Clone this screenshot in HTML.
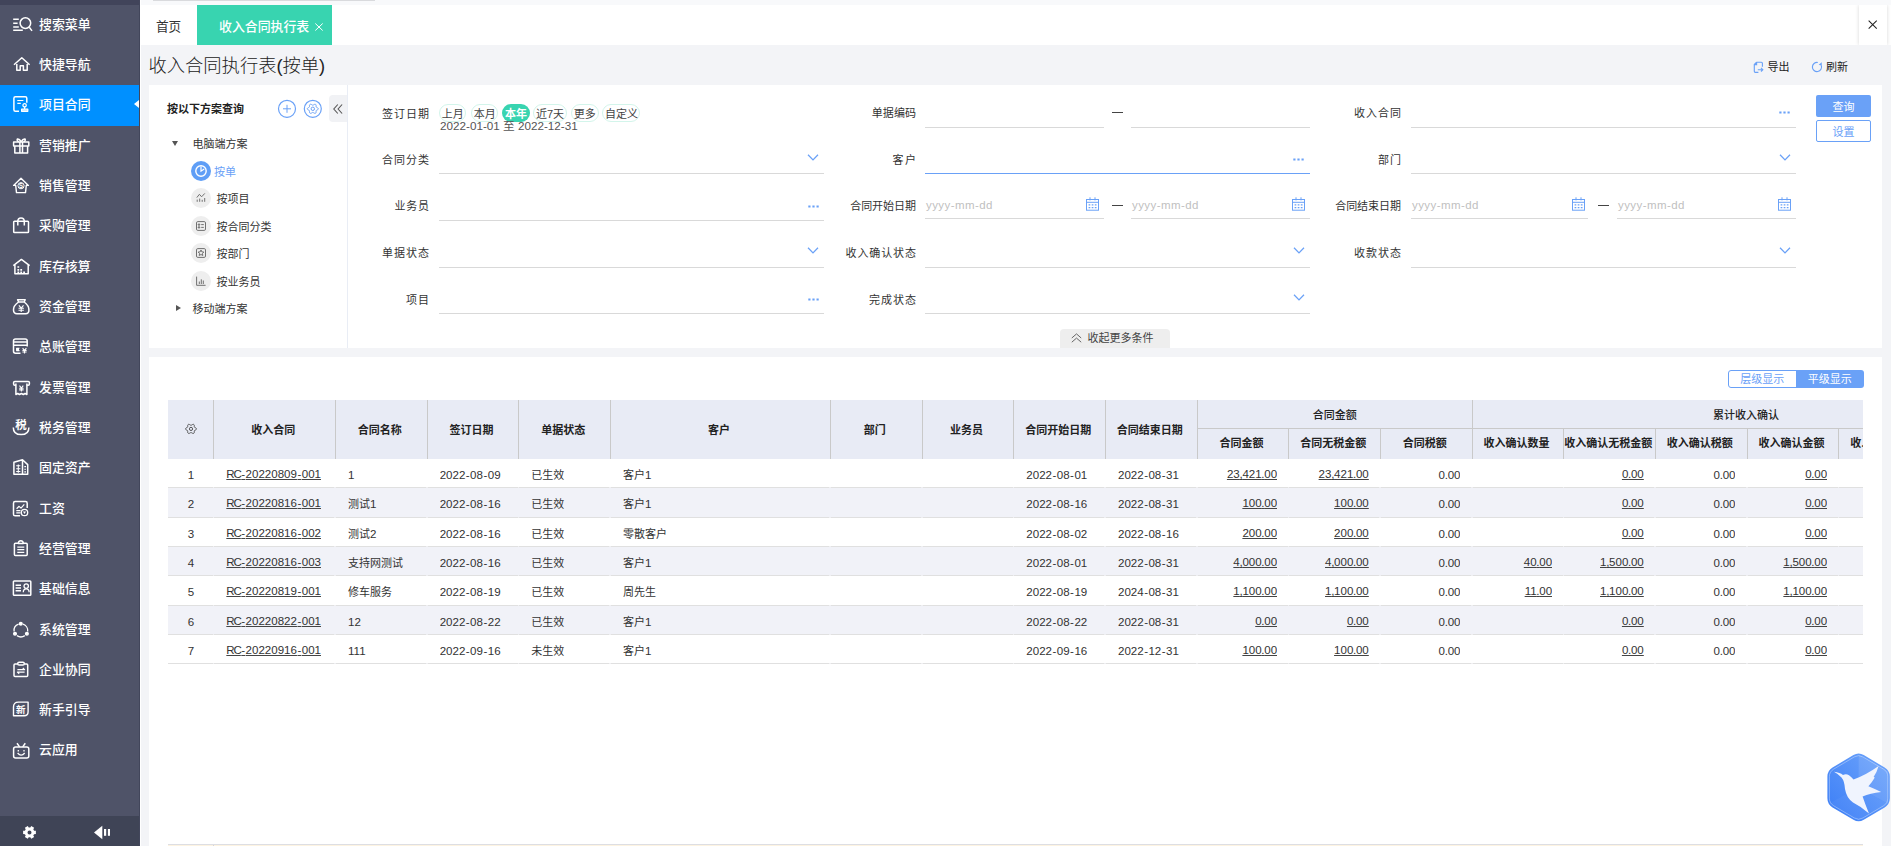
<!DOCTYPE html>
<html lang="zh-CN"><head><meta charset="utf-8"><title>收入合同执行表(按单)</title><style>
*{box-sizing:border-box;margin:0;padding:0}
html,body{width:1891px;height:846px;overflow:hidden}
body{position:relative;background:#f3f4f7;font-family:"Liberation Sans","Noto Sans CJK SC",sans-serif;font-size:11px;color:#333;-webkit-font-smoothing:antialiased}
.a{position:absolute;white-space:nowrap}
#side{left:0;top:0;width:140px;height:846px;background:#4f5368}
#side .top{left:0;top:0;width:140px;height:5px;background:#41445a}
#side .bot{left:0;top:816px;width:140px;height:30px;background:#3f4456}
.mi{left:0;width:139px;height:40.33px;color:#fff;font-size:12.9px;line-height:40.33px;font-weight:500}
.mi.on{background:#0090ff}
.mi span{position:absolute;left:39px;top:-0.5px}
.mi svg{position:absolute;left:13px;top:10.67px;width:16px;height:16px;overflow:visible;fill:none;stroke:#fff;stroke-width:1.5;stroke-linecap:butt;stroke-linejoin:round}
#tabs{left:140px;top:5px;width:1751px;height:40px;background:#fff;overflow:hidden}
.lbl{font-size:11px;line-height:16px;height:16px;text-align:right;color:#333}
.ul{height:1px;background:#d9d9d9}
.ph{font-size:11.5px;color:#bfbfbf;line-height:16px;height:16px;letter-spacing:0.42px}
.hd{font-weight:700;font-size:11px;color:#222;text-align:center;border-left:1px solid #c9c9c9}
.hd span{position:absolute;left:0;right:0}
.cell{font-size:11.55px;color:#333;top:0;height:29.33px;line-height:30.6px;overflow:hidden}
i{font-style:normal}
i.h{margin:0 .46px}
i.p{margin:0 -.3px}
i.z{font-size:11px}
i.rc{letter-spacing:-1.1px}
.en{font-size:11.55px}
.cell.r{text-align:right}
.cell u{text-decoration:underline;text-underline-offset:0.6px;text-decoration-thickness:1px;text-decoration-color:#444}
.row{left:168px;width:1695px;height:29.33px}
.row.ev{background:#f1f2f8}
.tree{font-size:11px;line-height:16px;height:16px;color:#333;margin-top:.8px}
.cir{width:20px;height:20px;border-radius:50%;background:#eee}
.sep{left:0;width:1695px;height:1px;background:linear-gradient(90deg,#e0e0e0 0.0px,#e0e0e0 44.6px,#eeeef1 44.6px,#eeeef1 46.2px,#e0e0e0 46.2px,#e0e0e0 166.3px,#eeeef1 166.3px,#eeeef1 167.9px,#e0e0e0 167.9px,#e0e0e0 258.0px,#eeeef1 258.0px,#eeeef1 259.6px,#e0e0e0 259.6px,#e0e0e0 349.6px,#eeeef1 349.6px,#eeeef1 351.2px,#e0e0e0 351.2px,#e0e0e0 441.3px,#eeeef1 441.3px,#eeeef1 442.9px,#e0e0e0 442.9px,#e0e0e0 661.3px,#eeeef1 661.3px,#eeeef1 662.9px,#e0e0e0 662.9px,#e0e0e0 753.0px,#eeeef1 753.0px,#eeeef1 754.6px,#e0e0e0 754.6px,#e0e0e0 844.6px,#eeeef1 844.6px,#eeeef1 846.2px,#e0e0e0 846.2px,#e0e0e0 936.3px,#eeeef1 936.3px,#eeeef1 937.9px,#e0e0e0 937.9px,#e0e0e0 1028.0px,#eeeef1 1028.0px,#eeeef1 1029.6px,#e0e0e0 1029.6px,#e0e0e0 1119.6px,#eeeef1 1119.6px,#eeeef1 1121.2px,#e0e0e0 1121.2px,#e0e0e0 1211.3px,#eeeef1 1211.3px,#eeeef1 1212.9px,#e0e0e0 1212.9px,#e0e0e0 1303.0px,#eeeef1 1303.0px,#eeeef1 1304.6px,#e0e0e0 1304.6px,#e0e0e0 1394.6px,#eeeef1 1394.6px,#eeeef1 1396.2px,#e0e0e0 1396.2px,#e0e0e0 1486.3px,#eeeef1 1486.3px,#eeeef1 1487.9px,#e0e0e0 1487.9px,#e0e0e0 1578.0px,#eeeef1 1578.0px,#eeeef1 1579.6px,#e0e0e0 1579.6px,#e0e0e0 1669.6px,#eeeef1 1669.6px,#eeeef1 1671.2px,#e0e0e0 1671.2px,#e0e0e0 1700px)}</style></head><body>
<div id="side" class="a">
<div class="a top"></div>
<div class="a" style="left:0;top:84.8px;width:139px;height:41.2px;background:#0090ff"></div>
<div class="a mi" style="top:5.00px"><svg viewBox="0 0 16 16"><path d="M0.2 3.3H5.8M0.2 7.2H4.6M0.2 11.1H5.8M0.2 14.3H9.8"/><circle cx="12.4" cy="7.1" r="5.3"/><path d="M16.3 11.3L19 14.9"/></svg><span>搜索菜单</span></div>
<div class="a mi" style="top:45.33px"><svg viewBox="0 0 16 16"><path d="M1 8.8L8.8 1.8L16.6 8.8M3.8 8V14.3H7.2V9.8H10.4V14.3H14.2V8"/></svg><span>快捷导航</span></div>
<div class="a mi" style="top:85.67px"><svg viewBox="0 0 16 16"><path d="M13.8 6.8V2.3Q13.8 0.8 12.3 0.8H2.4Q0.9 0.8 0.9 2.3V13.8Q0.9 15.3 2.4 15.3H6"/><path d="M4.3 4.5H10.4M4.3 7.4H7.8" stroke-width="1.2"/><circle cx="11.6" cy="9.3" r="1.7" stroke-width="1.3"/><path d="M8.6 13H14.8V15.3H8.6ZM11.6 11V13" fill="rgba(255,255,255,.75)" stroke-width="1.2"/></svg><span>项目合同</span></div>
<div class="a mi" style="top:126.00px"><svg viewBox="0 0 16 16"><rect x="0.6" y="4.9" width="15.2" height="4.1"/><path d="M1.8 9V15.9H14.6V9M6.9 4.9V15.9M9.5 4.9V15.9M8.2 4.9Q6.5 1.6 4.4 2Q3.4 3.6 5.8 4.9M8.2 4.9Q9.9 1.6 12 2Q13 3.6 10.6 4.9"/></svg><span>营销推广</span></div>
<div class="a mi" style="top:166.33px"><svg viewBox="0 0 16 16"><path d="M0.6 8.4L8 1.2L15.4 8.4H13.3L12.5 15.6H3.5L2.7 8.4Z" stroke-width="1.4"/><circle cx="8" cy="8.7" r="3.1" stroke-width="1"/><text x="8" y="11" font-size="6.4" font-weight="700" font-family="Liberation Sans,Noto Sans CJK SC,sans-serif" stroke="none" fill="#fff" text-anchor="middle">S</text></svg><span>销售管理</span></div>
<div class="a mi" style="top:206.66px"><svg viewBox="0 0 16 16"><rect x="0.7" y="4.3" width="14.8" height="11.2" rx="0.8"/><path d="M4.8 8.4V4.6Q4.8 1 8 1Q11.3 1 11.3 4.6V8.4"/></svg><span>采购管理</span></div>
<div class="a mi" style="top:247.00px"><svg viewBox="0 0 16 16"><path d="M0.3 7.6L8.4 1.4L16.6 7.6M1.9 6.6V15.8H15.2V6.6"/><path d="M4.4 9H6.2M4.4 11.8H6.2M7.3 11.8H9.1M4.4 14.4H6.2M7.3 14.4H9.1M10.2 14.4H12" stroke-width="1.7" stroke-linecap="butt"/></svg><span>库存核算</span></div>
<div class="a mi" style="top:287.33px"><svg viewBox="0 0 16 16"><path d="M4.6 1.7H12.2L11.2 4H5.6ZM5.6 4Q0.4 7.5 0.5 12Q0.6 15.7 4 15.7H12.6Q16 15.7 15.9 12Q16 7.5 11.2 4"/><path d="M5.9 7.3L8.2 10.2L10.5 7.3M5.5 10.3H10.9M5.5 12.3H10.9M8.2 10.2V14" stroke-width="1.1"/></svg><span>资金管理</span></div>
<div class="a mi" style="top:327.66px"><svg viewBox="0 0 16 16"><path d="M14.2 8.5V3Q14.2 1 12.2 1H2.5Q0.5 1 0.5 3V13.3Q0.5 15.2 2.5 15.2H7.5M0.5 4H14.2M0.5 7.3H14.2"/><path d="M6.5 10.2H3.6V12.6H6.5M3.6 11.4H6" stroke-width="1.1"/><path d="M9.6 10L11.5 12.3L13.4 10M9.4 12.4H13.6M9.4 14H13.6M11.5 12.3V15.6" stroke-width="1.1"/></svg><span>总账管理</span></div>
<div class="a mi" style="top:368.00px"><svg viewBox="0 0 16 16"><path d="M2.9 6.3H1.8Q0.6 6.3 0.6 5.1V3.6Q0.6 2.4 1.8 2.4H15.2Q16.4 2.4 16.4 3.600V5.100Q16.400 6.300 15.200 6.300H14.100"/><path d="M2.9 4.600V15.500L4.700 14.500L6.500 15.500L8.400 14.500L10.300 15.500L12.100 14.500L13.900 15.500V4.600"/><path d="M6.5 6.700L8.400 9L10.300 6.700M6.200 9.200H10.600M6.200 10.900H10.600M8.400 9V12.500" stroke-width="1.1"/></svg><span>发票管理</span></div>
<div class="a mi" style="top:408.33px"><svg viewBox="0 0 16 16"><path d="M0.3 8.400Q0.300 15.600 8.100 15.600Q15.900 15.600 15.900 8.400"/><text x="7.9" y="10" font-size="11.5" font-weight="700" font-family="Liberation Sans,Noto Sans CJK SC,sans-serif" stroke="none" fill="#fff" text-anchor="middle">税</text></svg><span>税务管理</span></div>
<div class="a mi" style="top:448.66px"><svg viewBox="0 0 16 16"><path d="M0.900 3.200V15.300H14.700V5.600L9.500 0.700ZM9.500 0.700V15.300"/><path d="M3.200 6.800H7.400M3.200 9.700H7.400M3.200 12.500H7.400M5.300 5.500V13.800M11.300 7.600H13M11.300 10.300H13M11.300 12.900H13" stroke-width="1.100"/></svg><span>固定资产</span></div>
<div class="a mi" style="top:489.00px"><svg viewBox="0 0 16 16"><path d="M14.200 8V3.200Q14.200 1.600 12.600 1.600H2.100Q0.500 1.600 0.500 3.200V14.200Q0.500 15.800 2.100 15.800H7"/><path d="M3.600 8.700L6.100 6.300L8 8.200L11.300 4.400M3.300 10.600H7.500M3.300 12.900H7.500" stroke-width="1.200"/><circle cx="11.500" cy="12.500" r="3.200" stroke-width="1.300"/><path d="M10 11.500H13L11.500 13.900Z" fill="#fff" stroke="none"/></svg><span>工资</span></div>
<div class="a mi" style="top:529.33px"><svg viewBox="0 0 16 16"><path d="M5.300 3.300H2.400Q1.400 3.300 1.400 4.300V14.600Q1.400 15.600 2.400 15.600H13.200Q14.200 15.600 14.200 14.600V4.300Q14.200 3.300 13.200 3.300H10.300M5.300 3.600Q5.300 0.800 7.800 0.800Q10.300 0.800 10.300 3.600Z"/><path d="M4.300 7.100H11.300M4.300 9.700H11.300M4.300 12.300H11.300" stroke-width="1.300"/></svg><span>经营管理</span></div>
<div class="a mi" style="top:569.66px"><svg viewBox="0 0 16 16"><rect x="0.400" y="1" width="17.400" height="14.300" rx="0.800"/><path d="M2.600 5.200H8M2.600 8H8M2.600 10.800H8" stroke-width="1.400"/><circle cx="13.200" cy="6.100" r="2.200" stroke-width="1.300"/><path d="M10.300 12.300Q10.300 8.800 13.200 8.800Q16.100 8.800 16.100 12.300" stroke-width="1.300"/></svg><span>基础信息</span></div>
<div class="a mi" style="top:610.00px"><svg viewBox="0 0 16 16"><path d="M5.600 3.200A6.800 6.800 0 0 0 1.100 10.500M10 3.200A6.800 6.800 0 0 1 14.700 10.500M4 14.600A6.800 6.800 0 0 0 11.800 14.600" stroke-width="1.300"/><circle cx="7.800" cy="2.700" r="1.300" fill="#fff"/><circle cx="2" cy="12.700" r="1.300" fill="#fff"/><circle cx="13.900" cy="12.700" r="1.300" fill="#fff"/></svg><span>系统管理</span></div>
<div class="a mi" style="top:650.33px"><svg viewBox="0 0 16 16"><path d="M4.700 2.900H2Q1 2.900 1 3.900V14.400Q1 15.400 2 15.400H13.700Q14.700 15.400 14.700 14.400V3.900Q14.700 2.900 13.700 2.900H11.300"/><rect x="4.700" y="1.300" width="6.600" height="2.800" rx="1.400"/><path d="M4.400 8.700H11.600L9.800 7M11.600 11.100H4.400L6.200 12.800" stroke-width="1.200"/></svg><span>企业协同</span></div>
<div class="a mi" style="top:690.66px"><svg viewBox="0 0 16 16"><path d="M5.500 1.100H15.100V10.800Q15.100 14.800 11.100 14.800H0.500V6.100Q0.500 1.100 5.500 1.100Z" stroke-width="1.400"/><text x="7.800" y="11.500" font-size="9.500" font-weight="700" font-family="Liberation Sans,Noto Sans CJK SC,sans-serif" stroke="none" fill="#fff" text-anchor="middle">新</text></svg><span>新手引导</span></div>
<div class="a mi" style="top:730.99px"><svg viewBox="0 0 16 16"><rect x="0.600" y="4.900" width="15.200" height="11.200" rx="2"/><path d="M4 1.200L6.600 4.900M12.300 1.200L9.700 4.900"/><path d="M5.300 8V9.400M11 8V9.400M4.600 11Q8.100 15.200 11.700 11" stroke-width="1.300"/></svg><span>云应用</span></div>
<div class="a" style="left:134px;top:100.3px;width:0;height:0;border-top:4.6px solid transparent;border-bottom:4.6px solid transparent;border-right:5px solid #fff"></div>
<div class="a bot"></div>
<svg class="a" style="left:22px;top:825px" width="15" height="15" viewBox="0 0 15 15"><path fill="#fff" fill-rule="evenodd" d="M12.09 5.67L13.88 5.70L13.88 9.10L12.09 9.13L11.29 10.51L12.16 12.08L9.22 13.77L8.30 12.23L6.70 12.23L5.78 13.77L2.84 12.08L3.71 10.51L2.91 9.13L1.12 9.10L1.12 5.70L2.91 5.67L3.71 4.29L2.84 2.72L5.78 1.03L6.70 2.57L8.30 2.57L9.22 1.03L12.16 2.72L11.29 4.29ZM9.5 7.4A2 2 0 1 0 5.5 7.4A2 2 0 1 0 9.5 7.4Z"/></svg>
<svg class="a" style="left:93px;top:825px" width="18" height="15" viewBox="0 0 18 15" fill="#fff"><path d="M1 7.5L9.300 0.800V14.200Z"/><rect x="11" y="4" width="2.200" height="6.800"/><rect x="14.900" y="4" width="2.100" height="6.800"/></svg>
</div>
<div class="a" style="left:141px;top:0;width:1750px;height:5px;background:#f8f9fb"></div>
<div class="a" style="left:140px;top:0;width:1px;height:846px;background:#fff"></div>
<div class="a" style="left:139px;top:0;width:1px;height:846px;background:#42465b"></div>
<div class="a" style="left:153px;top:0;width:222px;height:1px;background:#d9dadd"></div>
<div id="tabs" class="a">
<div class="a" style="left:16px;top:1.5px;height:40px;line-height:40px;font-size:12.6px;color:#333">首页</div>
<div class="a" style="left:57px;top:0;width:135px;height:40px;background:#38d4b0"></div>
<div class="a" style="left:79px;top:2px;height:40px;line-height:40px;font-size:12.9px;font-weight:500;color:#fff">收入合同执行表</div>
<svg class="a" style="left:174.5px;top:17.7px" width="8" height="8" viewBox="0 0 8 8"><path d="M0.3 0.5L7.7 7.5M7.7 0.5L0.3 7.5" stroke="#fff" stroke-width="1" fill="none"/></svg>
<div class="a" style="left:1719px;top:0;width:28px;height:40px;background:#fff;box-shadow:0 0 4px rgba(0,0,0,.16)"></div>
<svg class="a" style="left:1728.3px;top:15.2px" width="9.4" height="9.4" viewBox="0 0 10 10"><path d="M0.7 0.7L9.3 9.3M9.3 0.7L0.7 9.3" stroke="#222" stroke-width="1.1" fill="none"/></svg>
</div>
<div class="a" style="left:148.5px;top:51.6px;height:28px;line-height:28px;font-size:18.3px;font-weight:300;color:#222">收入合同执行表(按单)</div>
<svg class="a" style="left:1753px;top:60.5px" width="11" height="13" viewBox="0 0 11 13" fill="none" stroke="#6aa1f7" stroke-width="1.15"><path d="M3.6 1.2H8.4Q9.4 1.2 9.4 2.2V5.8M3.600 1.200L1.300 3.600V10.300Q1.300 11.300 2.300 11.300H5.400M3.600 1.200V3.600H1.300M4.800 8.700H9.800M8 6.900L9.800 8.700L8 10.500"/></svg>
<div class="a" style="left:1767.5px;top:59px;font-size:11px;line-height:16px;color:#222">导出</div>
<svg class="a" style="left:1811px;top:61px" width="12" height="12" viewBox="0 0 12 12" fill="none" stroke="#6aa1f7" stroke-width="1.15"><path d="M6.800 1.470A4.600 4.600 0 1 0 10.300 4.400"/><path d="M10.700 1.300L10.800 4.700L7.700 3.700Z" fill="#6aa1f7" stroke="none"/></svg>
<div class="a" style="left:1826px;top:59px;font-size:11px;line-height:16px;color:#222">刷新</div>
<div class="a" style="left:149px;top:85px;width:1733px;height:263px;background:#fff"></div>
<div class="a" style="left:346.7px;top:85px;width:1.3px;height:263px;background:#e9edf5"></div>
<div class="a" style="left:329px;top:95px;width:17.5px;height:27px;background:#f1f2f5;border-radius:4px 0 0 4px"></div>
<svg class="a" style="left:332.5px;top:103.5px" width="10" height="10" viewBox="0 0 10 10" fill="none" stroke="#555" stroke-width="1.1"><path d="M4.8 0.5L0.8 5L4.8 9.5M9.100 0.500L5.100 5L9.100 9.500"/></svg>
<div class="a" style="left:167px;top:101px;font-size:11px;font-weight:700;line-height:16px;color:#222">按以下方案查询</div>
<svg class="a" style="left:277px;top:99px" width="20" height="20" viewBox="0 0 20 20" fill="none" stroke="#6aa1f7" stroke-width="1.2"><circle cx="10" cy="9.8" r="8.5"/><path d="M10 5.800V13.800M6 9.800H14" stroke-width="1"/></svg>
<svg class="a" style="left:303px;top:99px" width="20" height="20" viewBox="0 0 20 20" fill="none" stroke="#6aa1f7" stroke-width="1.2"><circle cx="9.8" cy="9.8" r="8.5"/><circle cx="9.8" cy="9.8" r="1.7" stroke-width="1"/><path stroke-width="1" d="M15.30 9.80L15.17 10.24L14.82 10.62L14.34 10.93L13.84 11.17L13.43 11.37L13.18 11.61L13.08 11.94L13.09 12.37L13.12 12.89L13.08 13.43L12.89 13.91L12.55 14.23L12.08 14.35L11.54 14.26L11.02 14.02L10.55 13.74L10.15 13.51L9.80 13.43L9.45 13.51L9.05 13.74L8.58 14.02L8.06 14.26L7.52 14.35L7.05 14.23L6.71 13.91L6.52 13.43L6.48 12.89L6.51 12.37L6.52 11.94L6.42 11.61L6.17 11.37L5.76 11.17L5.26 10.93L4.78 10.62L4.43 10.24L4.30 9.80L4.43 9.36L4.78 8.98L5.26 8.67L5.76 8.43L6.17 8.23L6.42 7.99L6.52 7.66L6.51 7.23L6.48 6.71L6.52 6.17L6.71 5.69L7.05 5.37L7.52 5.25L8.06 5.34L8.58 5.58L9.05 5.86L9.45 6.09L9.80 6.17L10.15 6.09L10.55 5.86L11.02 5.58L11.54 5.34L12.08 5.25L12.55 5.37L12.89 5.69L13.08 6.17L13.12 6.71L13.09 7.23L13.08 7.66L13.18 7.99L13.43 8.23L13.84 8.43L14.34 8.67L14.82 8.98L15.17 9.36Z"/></svg>
<div class="a" style="left:171.5px;top:141px;width:0;height:0;border-left:3.5px solid transparent;border-right:3.5px solid transparent;border-top:5px solid #555"></div>
<div class="a tree" style="left:192.5px;top:135px">电脑端方案</div>
<div class="a cir" style="left:191px;top:161px;background:#5f9ef6"></div>
<svg class="a" style="left:191px;top:161px" width="20" height="20" viewBox="0 0 20 20" fill="none" stroke="#fff" stroke-width="1.4"><circle cx="10" cy="10" r="5.2"/><path d="M10 5.6V10.2L13.2 8" stroke-width="1.2"/></svg>
<div class="a tree" style="left:214px;top:163px;color:#6aa1f7">按单</div>
<div class="a cir" style="left:191px;top:188.3px"></div>
<svg class="a" style="left:191px;top:188.3px" width="20" height="20" viewBox="0 0 20 20" fill="none" stroke="#707070" stroke-width="1"><path d="M5.8 9.6L8.4 6.3L10.6 8.8L13.8 5.4M6.2 11.6V13.8M8.7 10.6V13.8M11.2 11.8V13.8M13.7 10V13.8"/></svg>
<div class="a tree" style="left:216.5px;top:190.3px">按项目</div>
<div class="a cir" style="left:191px;top:215.8px"></div>
<svg class="a" style="left:191px;top:215.8px" width="20" height="20" viewBox="0 0 20 20" fill="none" stroke="#707070" stroke-width="1"><rect x="5.5" y="5.6" width="9" height="8.8" rx="1.3"/><path d="M7.3 8.6H8.7M10.2 8.6H12.8M7.3 11.4H8.700M10.200 11.400H12.800"/><circle cx="8" cy="8.600" r="0.800"/><circle cx="8" cy="11.400" r="0.800"/></svg>
<div class="a tree" style="left:216.5px;top:217.8px">按合同分类</div>
<div class="a cir" style="left:191px;top:243.3px"></div>
<svg class="a" style="left:191px;top:243.3px" width="20" height="20" viewBox="0 0 20 20" fill="none" stroke="#707070" stroke-width="1"><rect x="5.500" y="5.600" width="9" height="8.800" rx="1.300"/><path d="M10 7L10.900 8.900L12.900 9.100L11.400 10.500L11.800 12.500L10 11.500L8.200 12.500L8.600 10.500L7.100 9.100L9.100 8.900Z"/></svg>
<div class="a tree" style="left:216.5px;top:245.3px">按部门</div>
<div class="a cir" style="left:191px;top:270.8px"></div>
<svg class="a" style="left:191px;top:270.8px" width="20" height="20" viewBox="0 0 20 20" fill="none" stroke="#707070" stroke-width="1"><path d="M5.600 5.600V14.300H14.600M8.300 13V10.500M10.300 13V8.300M12.300 13V9.500"/></svg>
<div class="a tree" style="left:216.5px;top:272.8px">按业务员</div>
<div class="a" style="left:175.5px;top:304.5px;width:0;height:0;border-top:3.5px solid transparent;border-bottom:3.5px solid transparent;border-left:5px solid #555"></div>
<div class="a tree" style="left:192.5px;top:300px">移动端方案</div>
<div class="a lbl" style="left:310.00px;width:120px;top:105.5px;letter-spacing:1.00px">签订日期</div>
<div class="a lbl" style="left:310.00px;width:120px;top:152.0px;letter-spacing:1.00px">合同分类</div>
<div class="a lbl" style="left:309.75px;width:120px;top:198.3px;letter-spacing:0.75px">业务员</div>
<div class="a lbl" style="left:310.00px;width:120px;top:245.0px;letter-spacing:1.00px">单据状态</div>
<div class="a lbl" style="left:310.00px;width:120px;top:292.0px;letter-spacing:1.00px">项目</div>
<div class="a ul" style="left:439px;top:172.5px;width:385px;background:#d9d9d9"></div>
<div class="a ul" style="left:439px;top:219.8px;width:385px;background:#d9d9d9"></div>
<div class="a ul" style="left:439px;top:266.8px;width:385px;background:#d9d9d9"></div>
<div class="a ul" style="left:439px;top:312.9px;width:385px;background:#d9d9d9"></div>
<svg class="a" style="left:807.0px;top:153.5px" width="12" height="7" viewBox="0 0 12 7" fill="none" stroke="#6aa1f7" stroke-width="1.25"><path d="M1 0.7L6 5.9L11 0.7"/></svg>
<svg class="a" style="left:807.5px;top:204.5px" width="11" height="3" viewBox="0 0 11 3" fill="#6aa1f7"><rect x="0.3" y="0.5" width="2.2" height="2"/><rect x="4.4" y="0.5" width="2.2" height="2"/><rect x="8.5" y="0.5" width="2.2" height="2"/></svg>
<svg class="a" style="left:807.0px;top:247.0px" width="12" height="7" viewBox="0 0 12 7" fill="none" stroke="#6aa1f7" stroke-width="1.25"><path d="M1 0.7L6 5.9L11 0.7"/></svg>
<svg class="a" style="left:807.5px;top:297.5px" width="11" height="3" viewBox="0 0 11 3" fill="#6aa1f7"><rect x="0.3" y="0.5" width="2.2" height="2"/><rect x="4.4" y="0.5" width="2.2" height="2"/><rect x="8.5" y="0.5" width="2.2" height="2"/></svg>
<div class="a" style="left:439.3px;top:104px;width:27px;height:17.5px;border-radius:9px;border:1px solid #d3f5eb;color:#444;font-size:11px;line-height:18px;text-align:center"><i class="z">上月</i></div>
<div class="a" style="left:471.2px;top:104px;width:27px;height:17.5px;border-radius:9px;border:1px solid #d3f5eb;color:#444;font-size:11px;line-height:18px;text-align:center"><i class="z">本月</i></div>
<div class="a" style="left:502px;top:104px;width:28px;height:17.5px;border-radius:9px;background:#38d4b0;color:#fff;font-weight:700;font-size:11px;line-height:20px;text-align:center">本年</div>
<div class="a" style="left:533.3px;top:104px;width:33.5px;height:17.5px;border-radius:9px;border:1px solid #d3f5eb;color:#444;font-size:11px;line-height:18px;text-align:center"><i class="z">近</i>7<i class="z">天</i></div>
<div class="a" style="left:571px;top:104px;width:27.5px;height:17.5px;border-radius:9px;border:1px solid #d3f5eb;color:#444;font-size:11px;line-height:18px;text-align:center"><i class="z">更多</i></div>
<div class="a" style="left:602.4px;top:104px;width:38px;height:17.5px;border-radius:9px;border:1px solid #d3f5eb;color:#444;font-size:11px;line-height:18px;text-align:center"><i class="z">自定义</i></div>
<div class="a" style="left:440px;top:117.5px;font-size:11.7px;line-height:16px;color:#555">2022-01-01 至 2022-12-31</div>
<div class="a lbl" style="left:796.07px;width:120px;top:105.0px;letter-spacing:0.07px">单据编码</div>
<div class="a lbl" style="left:797.60px;width:120px;top:152.0px;letter-spacing:1.60px">客户</div>
<div class="a lbl" style="left:795.96px;width:120px;top:198.0px;letter-spacing:-0.04px">合同开始日期</div>
<div class="a lbl" style="left:796.90px;width:120px;top:245.0px;letter-spacing:0.90px">收入确认状态</div>
<div class="a lbl" style="left:797.00px;width:120px;top:292.3px;letter-spacing:1.00px">完成状态</div>
<div class="a ul" style="left:925px;top:126.7px;width:178.5px;background:#d9d9d9"></div>
<div class="a ul" style="left:1131px;top:126.7px;width:179px;background:#d9d9d9"></div>
<div class="a" style="left:1112.0px;top:112.1px;width:11px;height:1px;background:#444"></div>
<div class="a ul" style="left:925px;top:172.5px;width:385px;background:#6aa1f7"></div>
<svg class="a" style="left:1293.2px;top:158.0px" width="11" height="3" viewBox="0 0 11 3" fill="#6aa1f7"><rect x="0.3" y="0.5" width="2.2" height="2"/><rect x="4.4" y="0.5" width="2.2" height="2"/><rect x="8.5" y="0.5" width="2.2" height="2"/></svg>
<div class="a ul" style="left:925px;top:217.7px;width:178.5px;background:#d9d9d9"></div>
<div class="a ul" style="left:1131px;top:217.7px;width:179px;background:#d9d9d9"></div>
<div class="a" style="left:1112.0px;top:205.0px;width:11px;height:1px;background:#444"></div>
<div class="a ph" style="left:926px;top:196.5px">yyyy-mm-dd</div>
<div class="a ph" style="left:1132px;top:196.5px">yyyy-mm-dd</div>
<svg class="a" style="left:1086.2px;top:196.9px" width="13" height="14" viewBox="0 0 13 14" fill="none" stroke="#6aa1f7" stroke-width="1"><rect x="0.5" y="2.5" width="12" height="10.7"/><path d="M0.5 5.3H12.5M4 0.3V3.4M9 0.3V3.4" /><path d="M2.6 7.9H10.6M2.6 10.6H10.6" stroke-dasharray="1.7 1.4" stroke-width="1.3"/></svg>
<svg class="a" style="left:1292.2px;top:196.9px" width="13" height="14" viewBox="0 0 13 14" fill="none" stroke="#6aa1f7" stroke-width="1"><rect x="0.5" y="2.5" width="12" height="10.7"/><path d="M0.5 5.3H12.5M4 0.3V3.4M9 0.3V3.4" /><path d="M2.6 7.9H10.6M2.6 10.6H10.6" stroke-dasharray="1.7 1.4" stroke-width="1.3"/></svg>
<div class="a ul" style="left:925px;top:266.7px;width:385px;background:#d9d9d9"></div>
<svg class="a" style="left:1292.7px;top:247.0px" width="12" height="7" viewBox="0 0 12 7" fill="none" stroke="#6aa1f7" stroke-width="1.25"><path d="M1 0.7L6 5.9L11 0.7"/></svg>
<div class="a ul" style="left:925px;top:312.9px;width:385px;background:#d9d9d9"></div>
<svg class="a" style="left:1292.7px;top:293.5px" width="12" height="7" viewBox="0 0 12 7" fill="none" stroke="#6aa1f7" stroke-width="1.25"><path d="M1 0.7L6 5.9L11 0.7"/></svg>
<div class="a lbl" style="left:1282.00px;width:120px;top:105.0px;letter-spacing:1.00px">收入合同</div>
<div class="a lbl" style="left:1282.00px;width:120px;top:152.0px;letter-spacing:1.00px">部门</div>
<div class="a lbl" style="left:1280.96px;width:120px;top:198.0px;letter-spacing:-0.04px">合同结束日期</div>
<div class="a lbl" style="left:1282.00px;width:120px;top:245.0px;letter-spacing:1.00px">收款状态</div>
<div class="a ul" style="left:1411px;top:126.9px;width:385px;background:#d9d9d9"></div>
<svg class="a" style="left:1779.0px;top:111.0px" width="11" height="3" viewBox="0 0 11 3" fill="#6aa1f7"><rect x="0.3" y="0.5" width="2.2" height="2"/><rect x="4.4" y="0.5" width="2.2" height="2"/><rect x="8.5" y="0.5" width="2.2" height="2"/></svg>
<div class="a ul" style="left:1411px;top:172.9px;width:385px;background:#d9d9d9"></div>
<svg class="a" style="left:1778.5px;top:153.5px" width="12" height="7" viewBox="0 0 12 7" fill="none" stroke="#6aa1f7" stroke-width="1.25"><path d="M1 0.7L6 5.9L11 0.7"/></svg>
<div class="a ul" style="left:1411px;top:217.7px;width:177px;background:#d9d9d9"></div>
<div class="a ul" style="left:1617px;top:217.7px;width:179px;background:#d9d9d9"></div>
<div class="a" style="left:1597.5px;top:205.0px;width:11px;height:1px;background:#444"></div>
<div class="a ph" style="left:1412px;top:196.5px">yyyy-mm-dd</div>
<div class="a ph" style="left:1618px;top:196.5px">yyyy-mm-dd</div>
<svg class="a" style="left:1572.1px;top:196.9px" width="13" height="14" viewBox="0 0 13 14" fill="none" stroke="#6aa1f7" stroke-width="1"><rect x="0.5" y="2.5" width="12" height="10.7"/><path d="M0.5 5.3H12.5M4 0.3V3.4M9 0.3V3.4" /><path d="M2.6 7.9H10.6M2.6 10.6H10.6" stroke-dasharray="1.7 1.4" stroke-width="1.3"/></svg>
<svg class="a" style="left:1777.8px;top:196.9px" width="13" height="14" viewBox="0 0 13 14" fill="none" stroke="#6aa1f7" stroke-width="1"><rect x="0.5" y="2.5" width="12" height="10.7"/><path d="M0.5 5.3H12.5M4 0.3V3.4M9 0.3V3.4" /><path d="M2.6 7.9H10.6M2.6 10.6H10.6" stroke-dasharray="1.7 1.4" stroke-width="1.3"/></svg>
<div class="a ul" style="left:1411px;top:266.8px;width:385px;background:#d9d9d9"></div>
<svg class="a" style="left:1778.5px;top:247.0px" width="12" height="7" viewBox="0 0 12 7" fill="none" stroke="#6aa1f7" stroke-width="1.25"><path d="M1 0.7L6 5.9L11 0.7"/></svg>
<div class="a" style="left:1816px;top:95px;width:55px;height:22px;border-radius:2px;background:#6aa1f7;color:#fff;font-size:11px;line-height:24px;text-align:center">查询</div>
<div class="a" style="left:1816px;top:120px;width:55px;height:22px;border-radius:2px;background:#fff;border:1px solid #6aa1f7;color:#6aa1f7;font-size:11px;line-height:22px;text-align:center">设置</div>
<div class="a" style="left:1060px;top:329px;width:110px;height:19px;border-radius:4px 4px 0 0;background:#eee"></div>
<svg class="a" style="left:1071px;top:333px" width="11" height="10" viewBox="0 0 11 10" fill="none" stroke="#666" stroke-width="1"><path d="M0.8 5L5.5 0.9L10.2 5M0.8 9.2L5.5 5.1L10.2 9.2"/></svg>
<div class="a" style="left:1087.5px;top:330px;font-size:11px;line-height:16px;color:#444">收起更多条件</div>
<div class="a" style="left:149px;top:357px;width:1733px;height:489px;background:#fff"></div>
<div class="a" style="left:1728px;top:370px;width:68.5px;height:18px;border:1px solid #6aa1f7;border-radius:3px 0 0 3px;background:#fff;color:#6aa1f7;font-size:11px;line-height:16px;text-align:center">层级显示</div>
<div class="a" style="left:1795.5px;top:370px;width:68.5px;height:18px;border-radius:0 3px 3px 0;background:#6aa1f7;color:#fff;font-size:11px;line-height:18px;text-align:center">平级显示</div>
<div class="a" style="left:168px;top:400px;width:1695px;height:459px;overflow:hidden">
<div class="a" style="left:0;top:0;width:1695px;height:58.7px;background:#e8ebf5"></div>
<div class="a hd" style="left:0px;top:0px;width:45px;height:58.70px;line-height:60.70px;padding-right:3.17px;border-left:none"></div>
<div class="a hd" style="left:45px;top:0px;width:122px;height:58.70px;line-height:60.70px;padding-right:2.67px">收入合同</div>
<div class="a hd" style="left:167px;top:0px;width:92px;height:58.70px;line-height:60.70px;padding-right:3.33px">合同名称</div>
<div class="a hd" style="left:259px;top:0px;width:91px;height:58.70px;line-height:60.70px;padding-right:3.00px">签订日期</div>
<div class="a hd" style="left:350px;top:0px;width:92px;height:58.70px;line-height:60.70px;padding-right:2.67px">单据状态</div>
<div class="a hd" style="left:442px;top:0px;width:220px;height:58.70px;line-height:60.70px;padding-right:3.00px">客户</div>
<div class="a hd" style="left:662px;top:0px;width:92px;height:58.70px;line-height:60.70px;padding-right:3.33px">部门</div>
<div class="a hd" style="left:754px;top:0px;width:91px;height:58.70px;line-height:60.70px;padding-right:3.00px">业务员</div>
<div class="a hd" style="left:845px;top:0px;width:92px;height:58.70px;line-height:60.70px;padding-right:2.67px">合同开始日期</div>
<div class="a hd" style="left:937px;top:0px;width:92px;height:58.70px;line-height:60.70px;padding-right:3.33px">合同结束日期</div>
<div class="a hd" style="left:1029px;top:0px;width:275px;height:29.00px;line-height:31.00px;padding-right:0.66px;font-weight:500">合同金额</div>
<div class="a hd" style="left:1304px;top:0px;width:658px;height:29.00px;line-height:31.00px;padding-right:3.33px"></div>
<div class="a hd" style="left:1029px;top:28.3px;width:91px;height:30.40px;line-height:30.40px;padding-right:3.00px">合同金额</div>
<div class="a hd" style="left:1120px;top:28.3px;width:92px;height:30.40px;line-height:30.40px;padding-right:2.67px">合同无税金额</div>
<div class="a hd" style="left:1212px;top:28.3px;width:92px;height:30.40px;line-height:30.40px;padding-right:3.33px">合同税额</div>
<div class="a hd" style="left:1304px;top:28.3px;width:91px;height:30.40px;line-height:30.40px;padding-right:3.00px">收入确认数量</div>
<div class="a hd" style="left:1395px;top:28.3px;width:92px;height:30.40px;line-height:30.40px;padding-right:2.67px">收入确认无税金额</div>
<div class="a hd" style="left:1487px;top:28.3px;width:92px;height:30.40px;line-height:30.40px;padding-right:3.33px">收入确认税额</div>
<div class="a hd" style="left:1579px;top:28.3px;width:91px;height:30.40px;line-height:30.40px;padding-right:3.00px">收入确认金额</div>
<div class="a hd" style="left:1670px;top:28.3px;width:92px;height:30.40px;line-height:30.40px;padding-right:2.67px">收入确认比例</div>
<div class="a" style="left:1528px;top:0;width:100px;height:29px;line-height:31px;font-weight:500;font-size:11px;color:#222;text-align:center">累计收入确认</div>
<svg class="a" style="left:15.5px;top:22px" width="14" height="14" viewBox="0 0 14 14" fill="none" stroke="#444" stroke-width="0.9"><circle cx="7" cy="6.9" r="1.6"/><path d="M12.50 6.90L12.37 7.34L12.02 7.72L11.54 8.03L11.04 8.27L10.63 8.47L10.38 8.71L10.28 9.04L10.29 9.47L10.32 9.99L10.28 10.53L10.09 11.01L9.75 11.33L9.28 11.45L8.74 11.36L8.22 11.12L7.75 10.84L7.35 10.61L7.00 10.53L6.65 10.61L6.25 10.84L5.78 11.12L5.26 11.36L4.72 11.45L4.25 11.33L3.91 11.01L3.72 10.53L3.68 9.99L3.71 9.47L3.72 9.04L3.62 8.71L3.37 8.47L2.96 8.27L2.46 8.03L1.98 7.72L1.63 7.34L1.50 6.90L1.63 6.46L1.98 6.08L2.46 5.77L2.96 5.53L3.37 5.33L3.62 5.09L3.72 4.76L3.71 4.33L3.68 3.81L3.72 3.27L3.91 2.79L4.25 2.47L4.72 2.35L5.26 2.44L5.78 2.68L6.25 2.96L6.65 3.19L7.00 3.27L7.35 3.19L7.75 2.96L8.22 2.68L8.74 2.44L9.28 2.35L9.75 2.47L10.09 2.79L10.28 3.27L10.32 3.81L10.29 4.33L10.28 4.76L10.38 5.09L10.63 5.33L11.04 5.53L11.54 5.77L12.02 6.08L12.37 6.46Z"/></svg>
<div class="a row" style="left:0;top:59px;width:1695px;height:29px">
<div class="a cell" style="left:0.00px;width:45.83px;text-align:center;line-height:32.6px">1</div>
<div class="a cell" style="left:58.33px;width:107.67px"><u><i class="rc">RC</i><i class="h">-</i>20220809<i class="h">-</i>001</u></div>
<div class="a cell" style="left:180.00px;width:77.67px;line-height:32.6px">1</div>
<div class="a cell" style="left:271.67px;width:77.66px;line-height:32.6px">2022<i class="h">-</i>08<i class="h">-</i>09</div>
<div class="a cell" style="left:363.33px;width:77.67px;line-height:32.6px"><i class="z">已生效</i></div>
<div class="a cell" style="left:455.00px;width:206.00px;line-height:32.6px"><i class="z">客户</i>1</div>
<div class="a cell" style="left:858.33px;width:77.67px;line-height:32.6px">2022<i class="h">-</i>08<i class="h">-</i>01</div>
<div class="a cell" style="left:950.00px;width:77.67px;line-height:32.6px">2022<i class="h">-</i>08<i class="h">-</i>31</div>
<div class="a cell" style="left:1029.17px;width:79.96px;text-align:right"><u>23<i class="p">,</i>421<i class="p">.</i>00</u></div>
<div class="a cell" style="left:1120.83px;width:79.97px;text-align:right"><u>23<i class="p">,</i>421<i class="p">.</i>00</u></div>
<div class="a cell" style="left:1212.50px;width:79.97px;text-align:right;line-height:32.6px">0<i class="p">.</i>00</div>
<div class="a cell" style="left:1395.83px;width:79.97px;text-align:right"><u>0<i class="p">.</i>00</u></div>
<div class="a cell" style="left:1487.50px;width:79.97px;text-align:right;line-height:32.6px">0<i class="p">.</i>00</div>
<div class="a cell" style="left:1579.17px;width:79.96px;text-align:right"><u>0<i class="p">.</i>00</u></div>
</div>
<div class="a row ev" style="left:0;top:88px;width:1695px;height:30px">
<div class="a cell" style="left:0.00px;width:45.83px;text-align:center;line-height:32.6px">2</div>
<div class="a cell" style="left:58.33px;width:107.67px"><u><i class="rc">RC</i><i class="h">-</i>20220816<i class="h">-</i>001</u></div>
<div class="a cell" style="left:180.00px;width:77.67px;line-height:32.6px"><i class="z">测试</i>1</div>
<div class="a cell" style="left:271.67px;width:77.66px;line-height:32.6px">2022<i class="h">-</i>08<i class="h">-</i>16</div>
<div class="a cell" style="left:363.33px;width:77.67px;line-height:32.6px"><i class="z">已生效</i></div>
<div class="a cell" style="left:455.00px;width:206.00px;line-height:32.6px"><i class="z">客户</i>1</div>
<div class="a cell" style="left:858.33px;width:77.67px;line-height:32.6px">2022<i class="h">-</i>08<i class="h">-</i>16</div>
<div class="a cell" style="left:950.00px;width:77.67px;line-height:32.6px">2022<i class="h">-</i>08<i class="h">-</i>31</div>
<div class="a cell" style="left:1029.17px;width:79.96px;text-align:right"><u>100<i class="p">.</i>00</u></div>
<div class="a cell" style="left:1120.83px;width:79.97px;text-align:right"><u>100<i class="p">.</i>00</u></div>
<div class="a cell" style="left:1212.50px;width:79.97px;text-align:right;line-height:32.6px">0<i class="p">.</i>00</div>
<div class="a cell" style="left:1395.83px;width:79.97px;text-align:right"><u>0<i class="p">.</i>00</u></div>
<div class="a cell" style="left:1487.50px;width:79.97px;text-align:right;line-height:32.6px">0<i class="p">.</i>00</div>
<div class="a cell" style="left:1579.17px;width:79.96px;text-align:right"><u>0<i class="p">.</i>00</u></div>
</div>
<div class="a row" style="left:0;top:118px;width:1695px;height:29px">
<div class="a cell" style="left:0.00px;width:45.83px;text-align:center;line-height:32.6px">3</div>
<div class="a cell" style="left:58.33px;width:107.67px"><u><i class="rc">RC</i><i class="h">-</i>20220816<i class="h">-</i>002</u></div>
<div class="a cell" style="left:180.00px;width:77.67px;line-height:32.6px"><i class="z">测试</i>2</div>
<div class="a cell" style="left:271.67px;width:77.66px;line-height:32.6px">2022<i class="h">-</i>08<i class="h">-</i>16</div>
<div class="a cell" style="left:363.33px;width:77.67px;line-height:32.6px"><i class="z">已生效</i></div>
<div class="a cell" style="left:455.00px;width:206.00px;line-height:32.6px"><i class="z">零散客户</i></div>
<div class="a cell" style="left:858.33px;width:77.67px;line-height:32.6px">2022<i class="h">-</i>08<i class="h">-</i>02</div>
<div class="a cell" style="left:950.00px;width:77.67px;line-height:32.6px">2022<i class="h">-</i>08<i class="h">-</i>16</div>
<div class="a cell" style="left:1029.17px;width:79.96px;text-align:right"><u>200<i class="p">.</i>00</u></div>
<div class="a cell" style="left:1120.83px;width:79.97px;text-align:right"><u>200<i class="p">.</i>00</u></div>
<div class="a cell" style="left:1212.50px;width:79.97px;text-align:right;line-height:32.6px">0<i class="p">.</i>00</div>
<div class="a cell" style="left:1395.83px;width:79.97px;text-align:right"><u>0<i class="p">.</i>00</u></div>
<div class="a cell" style="left:1487.50px;width:79.97px;text-align:right;line-height:32.6px">0<i class="p">.</i>00</div>
<div class="a cell" style="left:1579.17px;width:79.96px;text-align:right"><u>0<i class="p">.</i>00</u></div>
</div>
<div class="a row ev" style="left:0;top:147px;width:1695px;height:29px">
<div class="a cell" style="left:0.00px;width:45.83px;text-align:center;line-height:32.6px">4</div>
<div class="a cell" style="left:58.33px;width:107.67px"><u><i class="rc">RC</i><i class="h">-</i>20220816<i class="h">-</i>003</u></div>
<div class="a cell" style="left:180.00px;width:77.67px;line-height:32.6px"><i class="z">支持网测试</i></div>
<div class="a cell" style="left:271.67px;width:77.66px;line-height:32.6px">2022<i class="h">-</i>08<i class="h">-</i>16</div>
<div class="a cell" style="left:363.33px;width:77.67px;line-height:32.6px"><i class="z">已生效</i></div>
<div class="a cell" style="left:455.00px;width:206.00px;line-height:32.6px"><i class="z">客户</i>1</div>
<div class="a cell" style="left:858.33px;width:77.67px;line-height:32.6px">2022<i class="h">-</i>08<i class="h">-</i>01</div>
<div class="a cell" style="left:950.00px;width:77.67px;line-height:32.6px">2022<i class="h">-</i>08<i class="h">-</i>31</div>
<div class="a cell" style="left:1029.17px;width:79.96px;text-align:right"><u>4<i class="p">,</i>000<i class="p">.</i>00</u></div>
<div class="a cell" style="left:1120.83px;width:79.97px;text-align:right"><u>4<i class="p">,</i>000<i class="p">.</i>00</u></div>
<div class="a cell" style="left:1212.50px;width:79.97px;text-align:right;line-height:32.6px">0<i class="p">.</i>00</div>
<div class="a cell" style="left:1304.17px;width:79.96px;text-align:right"><u>40<i class="p">.</i>00</u></div>
<div class="a cell" style="left:1395.83px;width:79.97px;text-align:right"><u>1<i class="p">,</i>500<i class="p">.</i>00</u></div>
<div class="a cell" style="left:1487.50px;width:79.97px;text-align:right;line-height:32.6px">0<i class="p">.</i>00</div>
<div class="a cell" style="left:1579.17px;width:79.96px;text-align:right"><u>1<i class="p">,</i>500<i class="p">.</i>00</u></div>
</div>
<div class="a row" style="left:0;top:176px;width:1695px;height:30px">
<div class="a cell" style="left:0.00px;width:45.83px;text-align:center;line-height:32.6px">5</div>
<div class="a cell" style="left:58.33px;width:107.67px"><u><i class="rc">RC</i><i class="h">-</i>20220819<i class="h">-</i>001</u></div>
<div class="a cell" style="left:180.00px;width:77.67px;line-height:32.6px"><i class="z">修车服务</i></div>
<div class="a cell" style="left:271.67px;width:77.66px;line-height:32.6px">2022<i class="h">-</i>08<i class="h">-</i>19</div>
<div class="a cell" style="left:363.33px;width:77.67px;line-height:32.6px"><i class="z">已生效</i></div>
<div class="a cell" style="left:455.00px;width:206.00px;line-height:32.6px"><i class="z">周先生</i></div>
<div class="a cell" style="left:858.33px;width:77.67px;line-height:32.6px">2022<i class="h">-</i>08<i class="h">-</i>19</div>
<div class="a cell" style="left:950.00px;width:77.67px;line-height:32.6px">2024<i class="h">-</i>08<i class="h">-</i>31</div>
<div class="a cell" style="left:1029.17px;width:79.96px;text-align:right"><u>1<i class="p">,</i>100<i class="p">.</i>00</u></div>
<div class="a cell" style="left:1120.83px;width:79.97px;text-align:right"><u>1<i class="p">,</i>100<i class="p">.</i>00</u></div>
<div class="a cell" style="left:1212.50px;width:79.97px;text-align:right;line-height:32.6px">0<i class="p">.</i>00</div>
<div class="a cell" style="left:1304.17px;width:79.96px;text-align:right"><u>11<i class="p">.</i>00</u></div>
<div class="a cell" style="left:1395.83px;width:79.97px;text-align:right"><u>1<i class="p">,</i>100<i class="p">.</i>00</u></div>
<div class="a cell" style="left:1487.50px;width:79.97px;text-align:right;line-height:32.6px">0<i class="p">.</i>00</div>
<div class="a cell" style="left:1579.17px;width:79.96px;text-align:right"><u>1<i class="p">,</i>100<i class="p">.</i>00</u></div>
</div>
<div class="a row ev" style="left:0;top:206px;width:1695px;height:29px">
<div class="a cell" style="left:0.00px;width:45.83px;text-align:center;line-height:32.6px">6</div>
<div class="a cell" style="left:58.33px;width:107.67px"><u><i class="rc">RC</i><i class="h">-</i>20220822<i class="h">-</i>001</u></div>
<div class="a cell" style="left:180.00px;width:77.67px;line-height:32.6px">12</div>
<div class="a cell" style="left:271.67px;width:77.66px;line-height:32.6px">2022<i class="h">-</i>08<i class="h">-</i>22</div>
<div class="a cell" style="left:363.33px;width:77.67px;line-height:32.6px"><i class="z">已生效</i></div>
<div class="a cell" style="left:455.00px;width:206.00px;line-height:32.6px"><i class="z">客户</i>1</div>
<div class="a cell" style="left:858.33px;width:77.67px;line-height:32.6px">2022<i class="h">-</i>08<i class="h">-</i>22</div>
<div class="a cell" style="left:950.00px;width:77.67px;line-height:32.6px">2022<i class="h">-</i>08<i class="h">-</i>31</div>
<div class="a cell" style="left:1029.17px;width:79.96px;text-align:right"><u>0<i class="p">.</i>00</u></div>
<div class="a cell" style="left:1120.83px;width:79.97px;text-align:right"><u>0<i class="p">.</i>00</u></div>
<div class="a cell" style="left:1212.50px;width:79.97px;text-align:right;line-height:32.6px">0<i class="p">.</i>00</div>
<div class="a cell" style="left:1395.83px;width:79.97px;text-align:right"><u>0<i class="p">.</i>00</u></div>
<div class="a cell" style="left:1487.50px;width:79.97px;text-align:right;line-height:32.6px">0<i class="p">.</i>00</div>
<div class="a cell" style="left:1579.17px;width:79.96px;text-align:right"><u>0<i class="p">.</i>00</u></div>
</div>
<div class="a row" style="left:0;top:235px;width:1695px;height:29px">
<div class="a cell" style="left:0.00px;width:45.83px;text-align:center;line-height:32.6px">7</div>
<div class="a cell" style="left:58.33px;width:107.67px"><u><i class="rc">RC</i><i class="h">-</i>20220916<i class="h">-</i>001</u></div>
<div class="a cell" style="left:180.00px;width:77.67px;line-height:32.6px">111</div>
<div class="a cell" style="left:271.67px;width:77.66px;line-height:32.6px">2022<i class="h">-</i>09<i class="h">-</i>16</div>
<div class="a cell" style="left:363.33px;width:77.67px;line-height:32.6px"><i class="z">未生效</i></div>
<div class="a cell" style="left:455.00px;width:206.00px;line-height:32.6px"><i class="z">客户</i>1</div>
<div class="a cell" style="left:858.33px;width:77.67px;line-height:32.6px">2022<i class="h">-</i>09<i class="h">-</i>16</div>
<div class="a cell" style="left:950.00px;width:77.67px;line-height:32.6px">2022<i class="h">-</i>12<i class="h">-</i>31</div>
<div class="a cell" style="left:1029.17px;width:79.96px;text-align:right"><u>100<i class="p">.</i>00</u></div>
<div class="a cell" style="left:1120.83px;width:79.97px;text-align:right"><u>100<i class="p">.</i>00</u></div>
<div class="a cell" style="left:1212.50px;width:79.97px;text-align:right;line-height:32.6px">0<i class="p">.</i>00</div>
<div class="a cell" style="left:1395.83px;width:79.97px;text-align:right"><u>0<i class="p">.</i>00</u></div>
<div class="a cell" style="left:1487.50px;width:79.97px;text-align:right;line-height:32.6px">0<i class="p">.</i>00</div>
<div class="a cell" style="left:1579.17px;width:79.96px;text-align:right"><u>0<i class="p">.</i>00</u></div>
</div>
<div class="a sep" style="top:87px"></div>
<div class="a sep" style="top:117px"></div>
<div class="a sep" style="top:146px"></div>
<div class="a sep" style="top:175px"></div>
<div class="a sep" style="top:205px"></div>
<div class="a sep" style="top:234px"></div>
<div class="a sep" style="top:263px"></div>
<div class="a" style="left:1029.17px;top:28px;width:700px;height:1px;background:#c9c9c9"></div>
</div>
<div class="a" style="left:168px;top:844px;width:1695px;height:1px;background:#dddee3"></div>
<div class="a" style="left:168px;top:845px;width:1695px;height:1px;background:#fdf3e1"></div>
<div class="a" style="left:213px;top:845px;width:1px;height:1px;background:#d5d5da"></div>
<svg class="a" style="left:1823px;top:749px" width="68" height="76" viewBox="1823 749 68 76"><defs><linearGradient id="g1" x1="0" y1="1" x2="1" y2="0"><stop offset="0" stop-color="#3a7df6"/><stop offset="1" stop-color="#6fa5fb"/></linearGradient></defs><path d="M1853.44 755.11Q1858.60 752.05 1863.76 755.11L1884.64 767.49Q1889.80 770.55 1889.80 776.55L1889.80 798.35Q1889.80 804.35 1884.64 807.41L1863.76 819.79Q1858.60 822.85 1853.44 819.79L1832.56 807.41Q1827.40 804.35 1827.40 798.35L1827.40 776.55Q1827.40 770.55 1832.56 767.49Z" fill="url(#g1)"/><path d="M1858.6 787.45L1858.6 754.45L1888.1 771.45L1888.1 803.45Z" fill="#fff" fill-opacity=".10"/><path d="M1858.6 787.45L1888.1 803.45L1858.6 820.45L1829.1 803.45Z" fill="#fff" fill-opacity=".04"/><path d="M1854.30 756.90Q1858.60 754.35 1862.90 756.90L1883.50 769.10Q1887.80 771.65 1887.80 776.65L1887.80 798.25Q1887.80 803.25 1883.50 805.80L1862.90 818.00Q1858.60 820.55 1854.30 818.00L1833.70 805.80Q1829.40 803.25 1829.40 798.25L1829.40 776.65Q1829.40 771.65 1833.70 769.10Z" fill="none" stroke="#fff" stroke-opacity=".38" stroke-width="0.9"/><path d="M1834 771.8Q1840 772.6 1843 775Q1846 773.2 1849 775.2Q1851.5 777 1853.5 779.5Q1866 775 1878.6 766Q1877 772 1873.6 777L1874.8 777.6Q1872 782.5 1868.4 786.3Q1875 789 1881.2 792.1Q1870 793.5 1862.6 796.4Q1865.500 805 1869 813.400Q1861 806.500 1853 802.500Q1846.500 798 1845 789Q1844.500 781 1841.500 777.500Q1838.500 774.200 1834 771.800Z" fill="#f0f4fe"/></svg>
</body></html>
